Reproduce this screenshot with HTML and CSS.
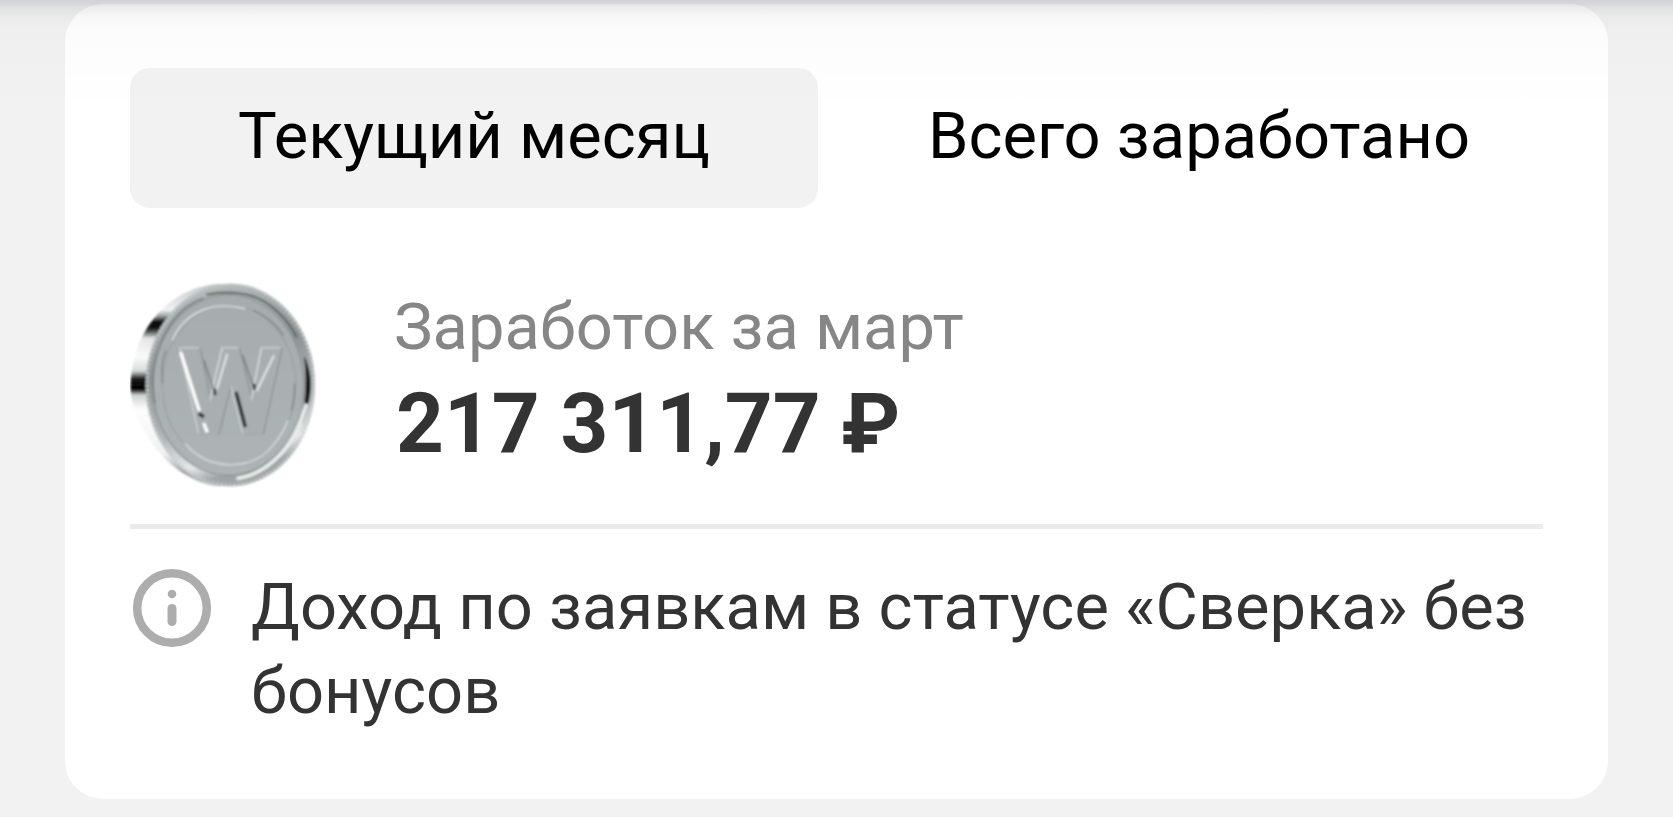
FILE: index.html
```html
<!DOCTYPE html>
<html lang="ru">
<head>
    <meta charset="UTF-8">
    <meta name="viewport" content="width=device-width, initial-scale=1.0">
    <title>Заработок</title>
    <link rel="stylesheet" href="styles.css">
</head>
<body>
    <div class="card">
        <div class="tabs">
            <button class="tab active">Текущий месяц</button>
            <button class="tab">Всего заработано</button>
        </div>

        <div class="earnings">
            <svg class="coin" viewBox="60 65 561 618">
                <defs>
                    <linearGradient id="edge" x1="0" y1="0" x2="0" y2="1">
                        <stop offset="0" stop-color="#c4c9ca"/>
                        <stop offset="0.13" stop-color="#f0f2f2"/>
                        <stop offset="0.16" stop-color="#999e9e"/>
                        <stop offset="0.19" stop-color="#050505"/>
                        <stop offset="0.22" stop-color="#111"/>
                        <stop offset="0.27" stop-color="#e4e6e6"/>
                        <stop offset="0.36" stop-color="#fafafa"/>
                        <stop offset="0.43" stop-color="#d9dcdc"/>
                        <stop offset="0.47" stop-color="#181a1a"/>
                        <stop offset="0.52" stop-color="#000"/>
                        <stop offset="0.55" stop-color="#cfd2d2"/>
                        <stop offset="0.62" stop-color="#fdfdfd"/>
                        <stop offset="0.84" stop-color="#f0f2f2"/>
                        <stop offset="0.93" stop-color="#9ea4a5"/>
                        <stop offset="1" stop-color="#c5c9ca"/>
                    </linearGradient>
                    <linearGradient id="rim" x1="0" y1="0" x2="0.25" y2="1">
                        <stop offset="0" stop-color="#c0c4c5"/>
                        <stop offset="0.45" stop-color="#8d9394"/>
                        <stop offset="0.75" stop-color="#b3b8b9"/>
                        <stop offset="0.92" stop-color="#e6e9e9"/>
                        <stop offset="1" stop-color="#a0a5a6"/>
                    </linearGradient>
                    <linearGradient id="face" x1="0" y1="0" x2="0" y2="1">
                        <stop offset="0" stop-color="#a6acae"/>
                        <stop offset="1" stop-color="#aeb4b6"/>
                    </linearGradient>
                    <filter id="soft">
                        <feGaussianBlur stdDeviation="3"/>
                    </filter>
                </defs>
                <g filter="url(#soft)">
                    <path d="M330 70C170 80 62 220 62 380C62 500 190 670 330 678Z" fill="url(#edge)"/>
                    <ellipse cx="361" cy="374" rx="254" ry="304" fill="url(#rim)"/>
                    <ellipse cx="361" cy="374" rx="250" ry="300" fill="none" stroke="#c4c9ca" stroke-width="9" stroke-dasharray="7 6"/>
                    <path d="M583 290C612 350 605 420 575 490C588 410 592 350 583 290Z" fill="#161818" stroke="#3c4040" stroke-width="3"/>
                    <path d="M290 103C340 92 400 96 440 112C490 134 535 180 560 230" fill="none" stroke="#5e6465" stroke-width="6"/>
                    <path d="M590 430C560 550 480 640 380 655" fill="none" stroke="#e9ecec" stroke-width="11"/>
                    <ellipse cx="355" cy="374" rx="226" ry="271" fill="url(#face)" stroke="#8b9192" stroke-width="4"/>
                    <path d="M135 430C110 300 170 150 280 114" fill="none" stroke="#7c8283" stroke-width="5"/>
                    <ellipse cx="357" cy="374" rx="200" ry="238" fill="none" stroke="#9ba1a3" stroke-width="4"/>
                    <path d="M187 240C225 150 315 122 405 145" fill="none" stroke="#d6dadb" stroke-width="5"/>
                    <path d="M430 150C475 170 505 200 520 225M553 370C555 410 550 430 545 450M158 370C152 310 160 290 168 270" fill="none" stroke="#7d8485" stroke-width="4"/>
                    <path d="M225 550C300 635 420 630 485 560C515 525 528 500 534 480" fill="none" stroke="#d3d8d8" stroke-width="5"/>
                    <text class="coin-letter" x="366" y="519" textLength="306" lengthAdjust="spacingAndGlyphs" fill="#81888a" stroke="#81888a">W</text>
                    <text class="coin-letter" x="359" y="514" textLength="306" lengthAdjust="spacingAndGlyphs" fill="#d8dcdd" stroke="#d8dcdd">W</text>
                    <text class="coin-letter" x="363" y="517" textLength="306" lengthAdjust="spacingAndGlyphs" fill="#a9afb1" stroke="#a9afb1">W</text>
                    <!-- highlights and shadows on the letter sides -->
                    <path d="M212 276L268 452M281 488L292 516" fill="none" stroke="#fff" stroke-width="10"/>
                    <path d="M352 280L318 395M492 285L440 392" fill="none" stroke="#e2e6e6" stroke-width="6"/>
                    <path d="M266 460L282 470M378 395L406 500" fill="none" stroke="#303434" stroke-width="11"/>
                    <path d="M282 300L314 400M398 285L432 385" fill="none" stroke="#7a8082" stroke-width="5"/>
                    <path d="M315 385L315 405M433 370L433 388" fill="none" stroke="#454a4b" stroke-width="9"/>
                </g>
            </svg>
            <div class="earnings-info">
                <div class="earnings-title">Заработок за март</div>
                <div class="earnings-amount">217 311,77 ₽</div>
            </div>
        </div>

        <div class="note">
            <svg class="note-icon" viewBox="0 0 84 84" fill="none" stroke="#adadad" stroke-linecap="round">
                <circle cx="42" cy="42" r="34.8" stroke-width="8.5"/>
                <circle cx="42" cy="28" r="4.3" fill="#adadad" stroke="none"/>
                <path d="M42 42.5V55.5" stroke-width="9"/>
            </svg>
            <p class="note-text">Доход по заявкам в статусе «Сверка» без бонусов</p>
        </div>
    </div>
</body>
</html>
```
FILE: styles.css
```css
* {
    margin: 0;
    padding: 0;
    box-sizing: border-box;
    font-family: Roboto, sans-serif;
}

body {
    background-color: #f2f2f2;
    padding: 4px 65px 19px;
    height: 817px;
    overflow: hidden;
}

/* shadow of the header above the card */
body::before {
    content: "";
    position: absolute;
    top: 0;
    left: 0;
    right: 0;
    height: 110px;
    pointer-events: none;
    background: linear-gradient(rgba(20, 22, 50, 0.14), rgba(20, 22, 50, 0.12) 4px, rgba(30, 35, 60, 0.09) 7px, rgba(30, 40, 50, 0.04) 16px, rgba(0, 0, 0, 0.012) 30px, rgba(0, 0, 0, 0.006) 65px, transparent);
}

.card {
    background: white;
    height: 795px;
    padding: 64px 65px 0;
    border-radius: 38px;
}

.tabs {
    display: grid;
    grid-template-columns: 1fr 1fr;
    gap: 37px;
}

.tab {
    height: 140px;
    border: none;
    border-radius: 20px;
    background: none;
    color: #000;
    font-size: 65px;
    padding-bottom: 4px;
    cursor: pointer;
}

.tab.active {
    background: #f2f2f2;
}

.earnings {
    display: flex;
    height: 321px;
    padding-top: 74px;
    border-bottom: 5px solid #ebebeb;
}

.coin {
    width: 187px;
    height: 206px;
    flex-shrink: 0;
    margin-right: 77px;
}

.coin-letter {
    font-size: 350px;
    font-weight: 700;
    text-anchor: middle;
    stroke-width: 8px;
}

.earnings-title {
    color: #868686;
    font-size: 65px;
    line-height: 90px;
}

.earnings-amount {
    color: #333;
    font-size: 83.5px;
    font-weight: 700;
    line-height: 104px;
    padding-left: 2px;
}

.note {
    display: flex;
    padding-top: 37px;
}

.note-icon {
    width: 84px;
    height: 84px;
    flex-shrink: 0;
    margin-right: 37px;
}

.note-text {
    color: #333;
    font-size: 65px;
    line-height: 83.7px;
    letter-spacing: 0.03px;
}
```
